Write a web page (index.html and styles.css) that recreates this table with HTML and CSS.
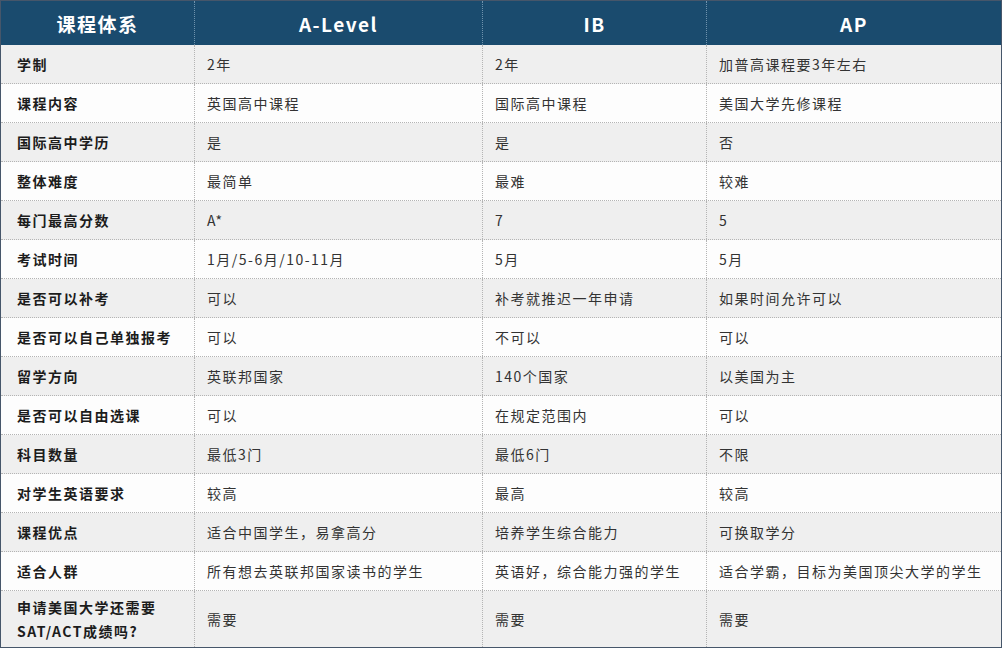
FILE: index.html
```html
<!DOCTYPE html>
<html lang="zh-CN">
<head>
<meta charset="utf-8">
<title>课程体系对比</title>
<link rel="stylesheet" href="styles.css">
</head>
<body>
<div class="table">
  <div class="row head">
    <div class="cell">课程体系</div>
    <div class="cell">A-Level</div>
    <div class="cell">IB</div>
    <div class="cell">AP</div>
  </div>
  <div class="row odd"><div class="cell label">学制</div><div class="cell">2年</div><div class="cell">2年</div><div class="cell">加普高课程要3年左右</div></div>
  <div class="row"><div class="cell label">课程内容</div><div class="cell">英国高中课程</div><div class="cell">国际高中课程</div><div class="cell">美国大学先修课程</div></div>
  <div class="row odd"><div class="cell label">国际高中学历</div><div class="cell">是</div><div class="cell">是</div><div class="cell">否</div></div>
  <div class="row"><div class="cell label">整体难度</div><div class="cell">最简单</div><div class="cell">最难</div><div class="cell">较难</div></div>
  <div class="row odd"><div class="cell label">每门最高分数</div><div class="cell">A*</div><div class="cell">7</div><div class="cell">5</div></div>
  <div class="row"><div class="cell label">考试时间</div><div class="cell">1月/5-6月/10-11月</div><div class="cell">5月</div><div class="cell">5月</div></div>
  <div class="row odd"><div class="cell label">是否可以补考</div><div class="cell">可以</div><div class="cell">补考就推迟一年申请</div><div class="cell">如果时间允许可以</div></div>
  <div class="row"><div class="cell label">是否可以自己单独报考</div><div class="cell">可以</div><div class="cell">不可以</div><div class="cell">可以</div></div>
  <div class="row odd"><div class="cell label">留学方向</div><div class="cell">英联邦国家</div><div class="cell">140个国家</div><div class="cell">以美国为主</div></div>
  <div class="row"><div class="cell label">是否可以自由选课</div><div class="cell">可以</div><div class="cell">在规定范围内</div><div class="cell">可以</div></div>
  <div class="row odd"><div class="cell label">科目数量</div><div class="cell">最低3门</div><div class="cell">最低6门</div><div class="cell">不限</div></div>
  <div class="row"><div class="cell label">对学生英语要求</div><div class="cell">较高</div><div class="cell">最高</div><div class="cell">较高</div></div>
  <div class="row odd"><div class="cell label">课程优点</div><div class="cell">适合中国学生，易拿高分</div><div class="cell">培养学生综合能力</div><div class="cell">可换取学分</div></div>
  <div class="row"><div class="cell label">适合人群</div><div class="cell">所有想去英联邦国家读书的学生</div><div class="cell">英语好，综合能力强的学生</div><div class="cell">适合学霸，目标为美国顶尖大学的学生</div></div>
  <div class="row odd last"><div class="cell label">申请美国大学还需要<br>SAT/ACT成绩吗?</div><div class="cell">需要</div><div class="cell">需要</div><div class="cell">需要</div></div>
</div>
</body>
</html>
```

FILE: styles.css
```css
html, body {
  margin: 0;
  padding: 0;
  background: #ffffff;
}

body {
  font-family: "Noto Sans CJK SC", "Noto Sans", sans-serif;
  color: #333333;
}

.table {
  width: 1002px;
  box-sizing: border-box;
  border: 1px solid #46566a;
  background: #fdfdfd;
}

.row {
  display: grid;
  grid-template-columns: 194px 288px 224px 294px;
  height: 39px;
  box-sizing: border-box;
  border-bottom: 1px dotted #b4b4b4;
}

.row.odd {
  background: #efefef;
}

.row.last {
  height: 56px;
  border-bottom: none;
}

.cell {
  display: flex;
  align-items: center;
  padding-left: 12px;
  font-size: 14px;
  letter-spacing: 1.5px;
  border-right: 1px dotted #b4b4b4;
  white-space: nowrap;
}

.cell:last-child {
  border-right: none;
}

.cell.label {
  padding-left: 16px;
  font-weight: 700;
  color: #1c1c1c;
  line-height: 24px;
}

.row.head {
  height: 44px;
  background: #1a4b6e;
  border-bottom: none;
}

.row.head .cell {
  justify-content: center;
  padding-left: 0;
  color: #ffffff;
  font-size: 19px;
  font-weight: 700;
  letter-spacing: 1.5px;
  border-right: 1px dotted #6f93ad;
}

.row.head .cell:last-child {
  border-right: none;
}
```
